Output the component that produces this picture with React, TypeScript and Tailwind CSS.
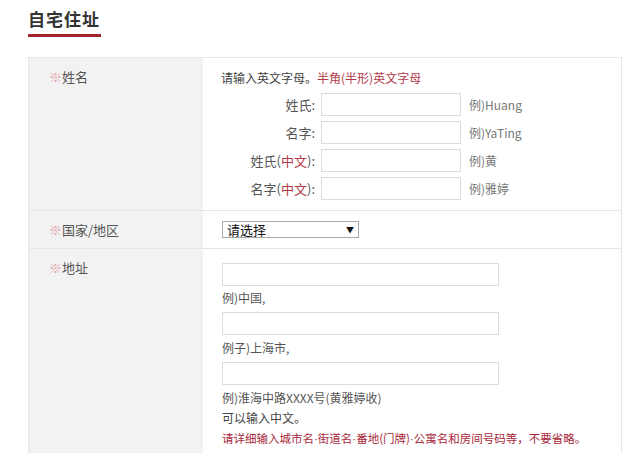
import React from "react";

const font = { fontFamily: '"Noto Sans CJK SC", "Liberation Sans", sans-serif' };

function Mark() {
  return <span className="text-[#e3a3ab]">※</span>;
}

function Dot() {
  return <span className="font-['Liberation_Sans',sans-serif]">·</span>;
}

function NameRow({ label, hint }: { label: React.ReactNode; hint: string }) {
  return (
    <div className="flex items-center h-[23px]">
      <div className="w-[96px] text-right text-[13px] text-[#555] pr-[2px]">{label}</div>
      <input className="ml-[4px] w-[140px] h-[23px] border border-[#dcdcdc] bg-white outline-none" />
      <span className="ml-[8px] text-[12px] text-[#777]">{hint}</span>
    </div>
  );
}

function Zh() {
  return <span className="text-[#b23a48]">中文</span>;
}

export default function App() {
  return (
    <div className="min-h-screen bg-white pl-[28px] overflow-hidden" style={font}>
      <div className="pt-[7px]">
        <h1 className="w-[73px] whitespace-nowrap text-[17px] font-bold leading-[24px] text-[#333] pb-[3px] border-b-[3px] border-[#a3262a] tracking-[1px]">
          自宅住址
        </h1>
      </div>

      <div className="mt-[20px] w-[594px] border border-[#e6e6e6]">
        {/* name */}
        <div className="flex">
          <div className="w-[174px] shrink-0 bg-[#f2f2f2] pl-[20px] pt-[10px] text-[13px] leading-[18px] text-[#555]">
            <Mark />姓名
          </div>
          <div className="flex-1 pl-[18px] pt-[11px] pb-[10px]">
            <p className="text-[12px] leading-[18px] text-[#444]">
              请输入英文字母。<span className="text-[#b23a48]">半角(半形)英文字母</span>
            </p>
            <div className="mt-[6px] flex flex-col gap-[5px]">
              <NameRow label="姓氏:" hint="例)Huang" />
              <NameRow label="名字:" hint="例)YaTing" />
              <NameRow label={<>姓氏(<Zh />):</>} hint="例)黄" />
              <NameRow label={<>名字(<Zh />):</>} hint="例)雅婷" />
            </div>
          </div>
        </div>

        {/* country */}
        <div className="flex border-t border-[#e6e6e6] h-[38px]">
          <div className="w-[174px] shrink-0 bg-[#f2f2f2] pl-[20px] flex items-center text-[13px] text-[#555]">
            <Mark />国家/地区
          </div>
          <div className="flex-1 pl-[19px] flex items-center">
            <div className="w-[137px] h-[17px] border border-[#a9a9a9] bg-white flex items-center justify-between px-[4px] text-[13px] leading-none text-[#111]">
              <span>请选择</span>
              <span className="text-[8px]">▼</span>
            </div>
          </div>
        </div>

        {/* address */}
        <div className="flex border-t border-[#e6e6e6]">
          <div className="w-[174px] shrink-0 bg-[#f2f2f2] pl-[20px] pt-[10px] text-[13px] leading-[18px] text-[#555]">
            <Mark />地址
          </div>
          <div className="flex-1 pl-[19px] pt-[14px] pb-[20px] text-[12px] text-[#555]">
            <input className="block w-[277px] h-[23px] border border-[#dcdcdc] bg-white outline-none" />
            <p className="mt-[2px] leading-[20px]">例)中国,</p>
            <input className="mt-[4px] block w-[277px] h-[23px] border border-[#dcdcdc] bg-white outline-none" />
            <p className="mt-[3px] leading-[20px]">例子)上海市,</p>
            <input className="mt-[4px] block w-[277px] h-[23px] border border-[#dcdcdc] bg-white outline-none" />
            <p className="mt-[3px] leading-[20px]">例)淮海中路XXXX号(黄雅婷收)</p>
            <p className="leading-[20px] text-[#444]">可以输入中文。</p>
            <p className="leading-[20px] text-[11.5px] text-[#a8283a] whitespace-nowrap">
              请详细输入城市名<Dot />街道名<Dot />番地(门牌)<Dot />公寓名和房间号码等，不要省略。
            </p>
            <p className="leading-[20px] text-[11.5px] text-[#a8283a] whitespace-nowrap">
              邮寄地址若为公司等请注明公司名称，如有部门请一并填写（请以中文填写）。
            </p>
          </div>
        </div>
      </div>
    </div>
  );
}
